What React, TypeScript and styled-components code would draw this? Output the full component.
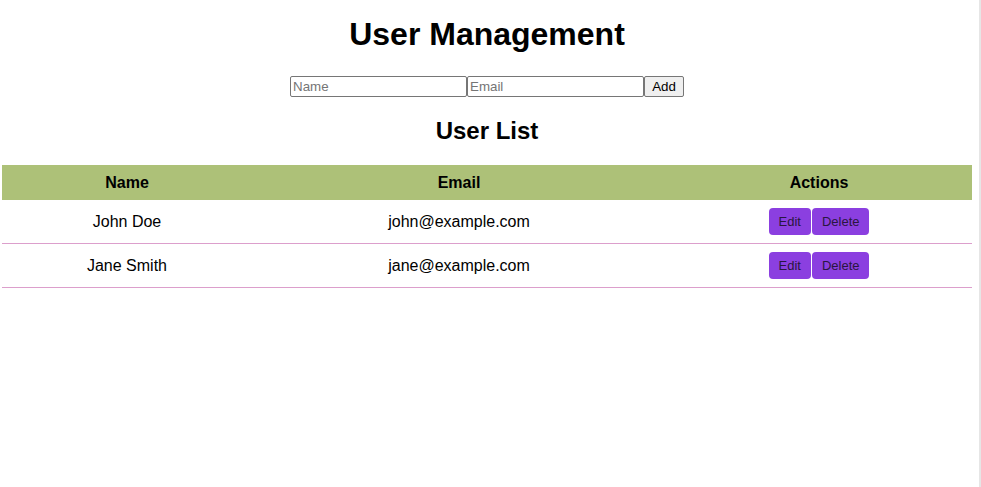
import React, { useState } from 'react';
import styled, { createGlobalStyle } from 'styled-components';

interface User {
  id: number;
  name: string;
  email: string;
}

const initialUsers: User[] = [
  { id: 1, name: 'John Doe', email: 'john@example.com' },
  { id: 2, name: 'Jane Smith', email: 'jane@example.com' },
];

const App: React.FC = () => {
  const [users, setUsers] = useState<User[]>(initialUsers);
  const [name, setName] = useState('');
  const [email, setEmail] = useState('');

  const addUser = () => {
    if (!name || !email) return;
    setUsers([...users, { id: Date.now(), name, email }]);
    setName('');
    setEmail('');
  };

  const removeUser = (id: number) => () =>
    setUsers(users.filter((u) => u.id !== id));

  return (
    <>
      <GlobalStyle />
      <Page>
        <Title>User Management</Title>
        <Form>
          <Input
            placeholder="Name"
            value={name}
            onChange={(e) => setName(e.target.value)}
          />
          <Input
            placeholder="Email"
            value={email}
            onChange={(e) => setEmail(e.target.value)}
          />
          <AddButton onClick={addUser}>Add</AddButton>
        </Form>
        <SubTitle>User List</SubTitle>
        <Table>
          <colgroup>
            <col style={{ width: 250 }} />
            <col style={{ width: 414 }} />
            <col />
          </colgroup>
          <thead>
            <tr>
              <Th>Name</Th>
              <Th>Email</Th>
              <Th>Actions</Th>
            </tr>
          </thead>
          <tbody>
            {users.map((user) => (
              <Row key={user.id}>
                <Td>{user.name}</Td>
                <Td>{user.email}</Td>
                <Td>
                  <Actions>
                    <ActionButton>Edit</ActionButton>
                    <ActionButton onClick={removeUser(user.id)}>Delete</ActionButton>
                  </Actions>
                </Td>
              </Row>
            ))}
          </tbody>
        </Table>
      </Page>
    </>
  );
};

const GlobalStyle = createGlobalStyle`
  html, body {
    margin: 0;
    padding: 0;
    background: #ffffff;
  }
  body {
    font-family: "Liberation Sans", Arial, sans-serif;
    color: #000000;
  }
`;

const Page = styled.div`
  width: 981px;
  min-height: 487px;
  box-sizing: border-box;
  padding: 0 7px 0 2px;
  border-right: 2px solid #e6e6e6;
  display: flex;
  flex-direction: column;
  align-items: center;
`;

const Title = styled.h1`
  font-size: 32px;
  font-weight: bold;
  line-height: 37px;
  margin: 16px 0 23px;
`;

const Form = styled.div`
  display: flex;
  align-items: stretch;
`;

const Input = styled.input`
  width: 177px;
  height: 21px;
  box-sizing: border-box;
  border: 1px solid #767676;
  border-radius: 2px;
  padding: 1px 2px;
  font-family: "Liberation Sans", Arial, sans-serif;
  font-size: 13.33px;
  color: #000;

  &::placeholder {
    color: #757575;
  }
`;

const AddButton = styled.button`
  width: 40px;
  height: 21px;
  box-sizing: border-box;
  border: 1px solid #767676;
  border-radius: 2px;
  background: #efefef;
  font-family: "Liberation Sans", Arial, sans-serif;
  font-size: 13.33px;
  color: #000;
  padding: 0;
`;

const SubTitle = styled.h2`
  font-size: 24px;
  font-weight: bold;
  line-height: 28px;
  margin: 20px 0 20px;
`;

const Table = styled.table`
  width: 970px;
  border-collapse: collapse;
  table-layout: fixed;
`;

const Th = styled.th`
  background: #adc178;
  height: 35px;
  padding: 0;
  font-size: 16px;
  font-weight: bold;
  text-align: center;
`;

const Row = styled.tr`
  border-bottom: 1px solid #dc9fcc;
`;

const Td = styled.td`
  height: 43px;
  padding: 0;
  font-size: 16px;
  line-height: 40px;
  text-align: center;
`;

const Actions = styled.div`
  display: flex;
  justify-content: center;
  gap: 1px;
`;

const ActionButton = styled.button`
  height: 27px;
  padding: 0 10px;
  border: none;
  border-radius: 4px;
  background: #8b3fe0;
  color: #2a1640;
  font-family: "Liberation Sans", Arial, sans-serif;
  font-size: 13px;
  line-height: 27px;
  cursor: pointer;
`;

export default App;
